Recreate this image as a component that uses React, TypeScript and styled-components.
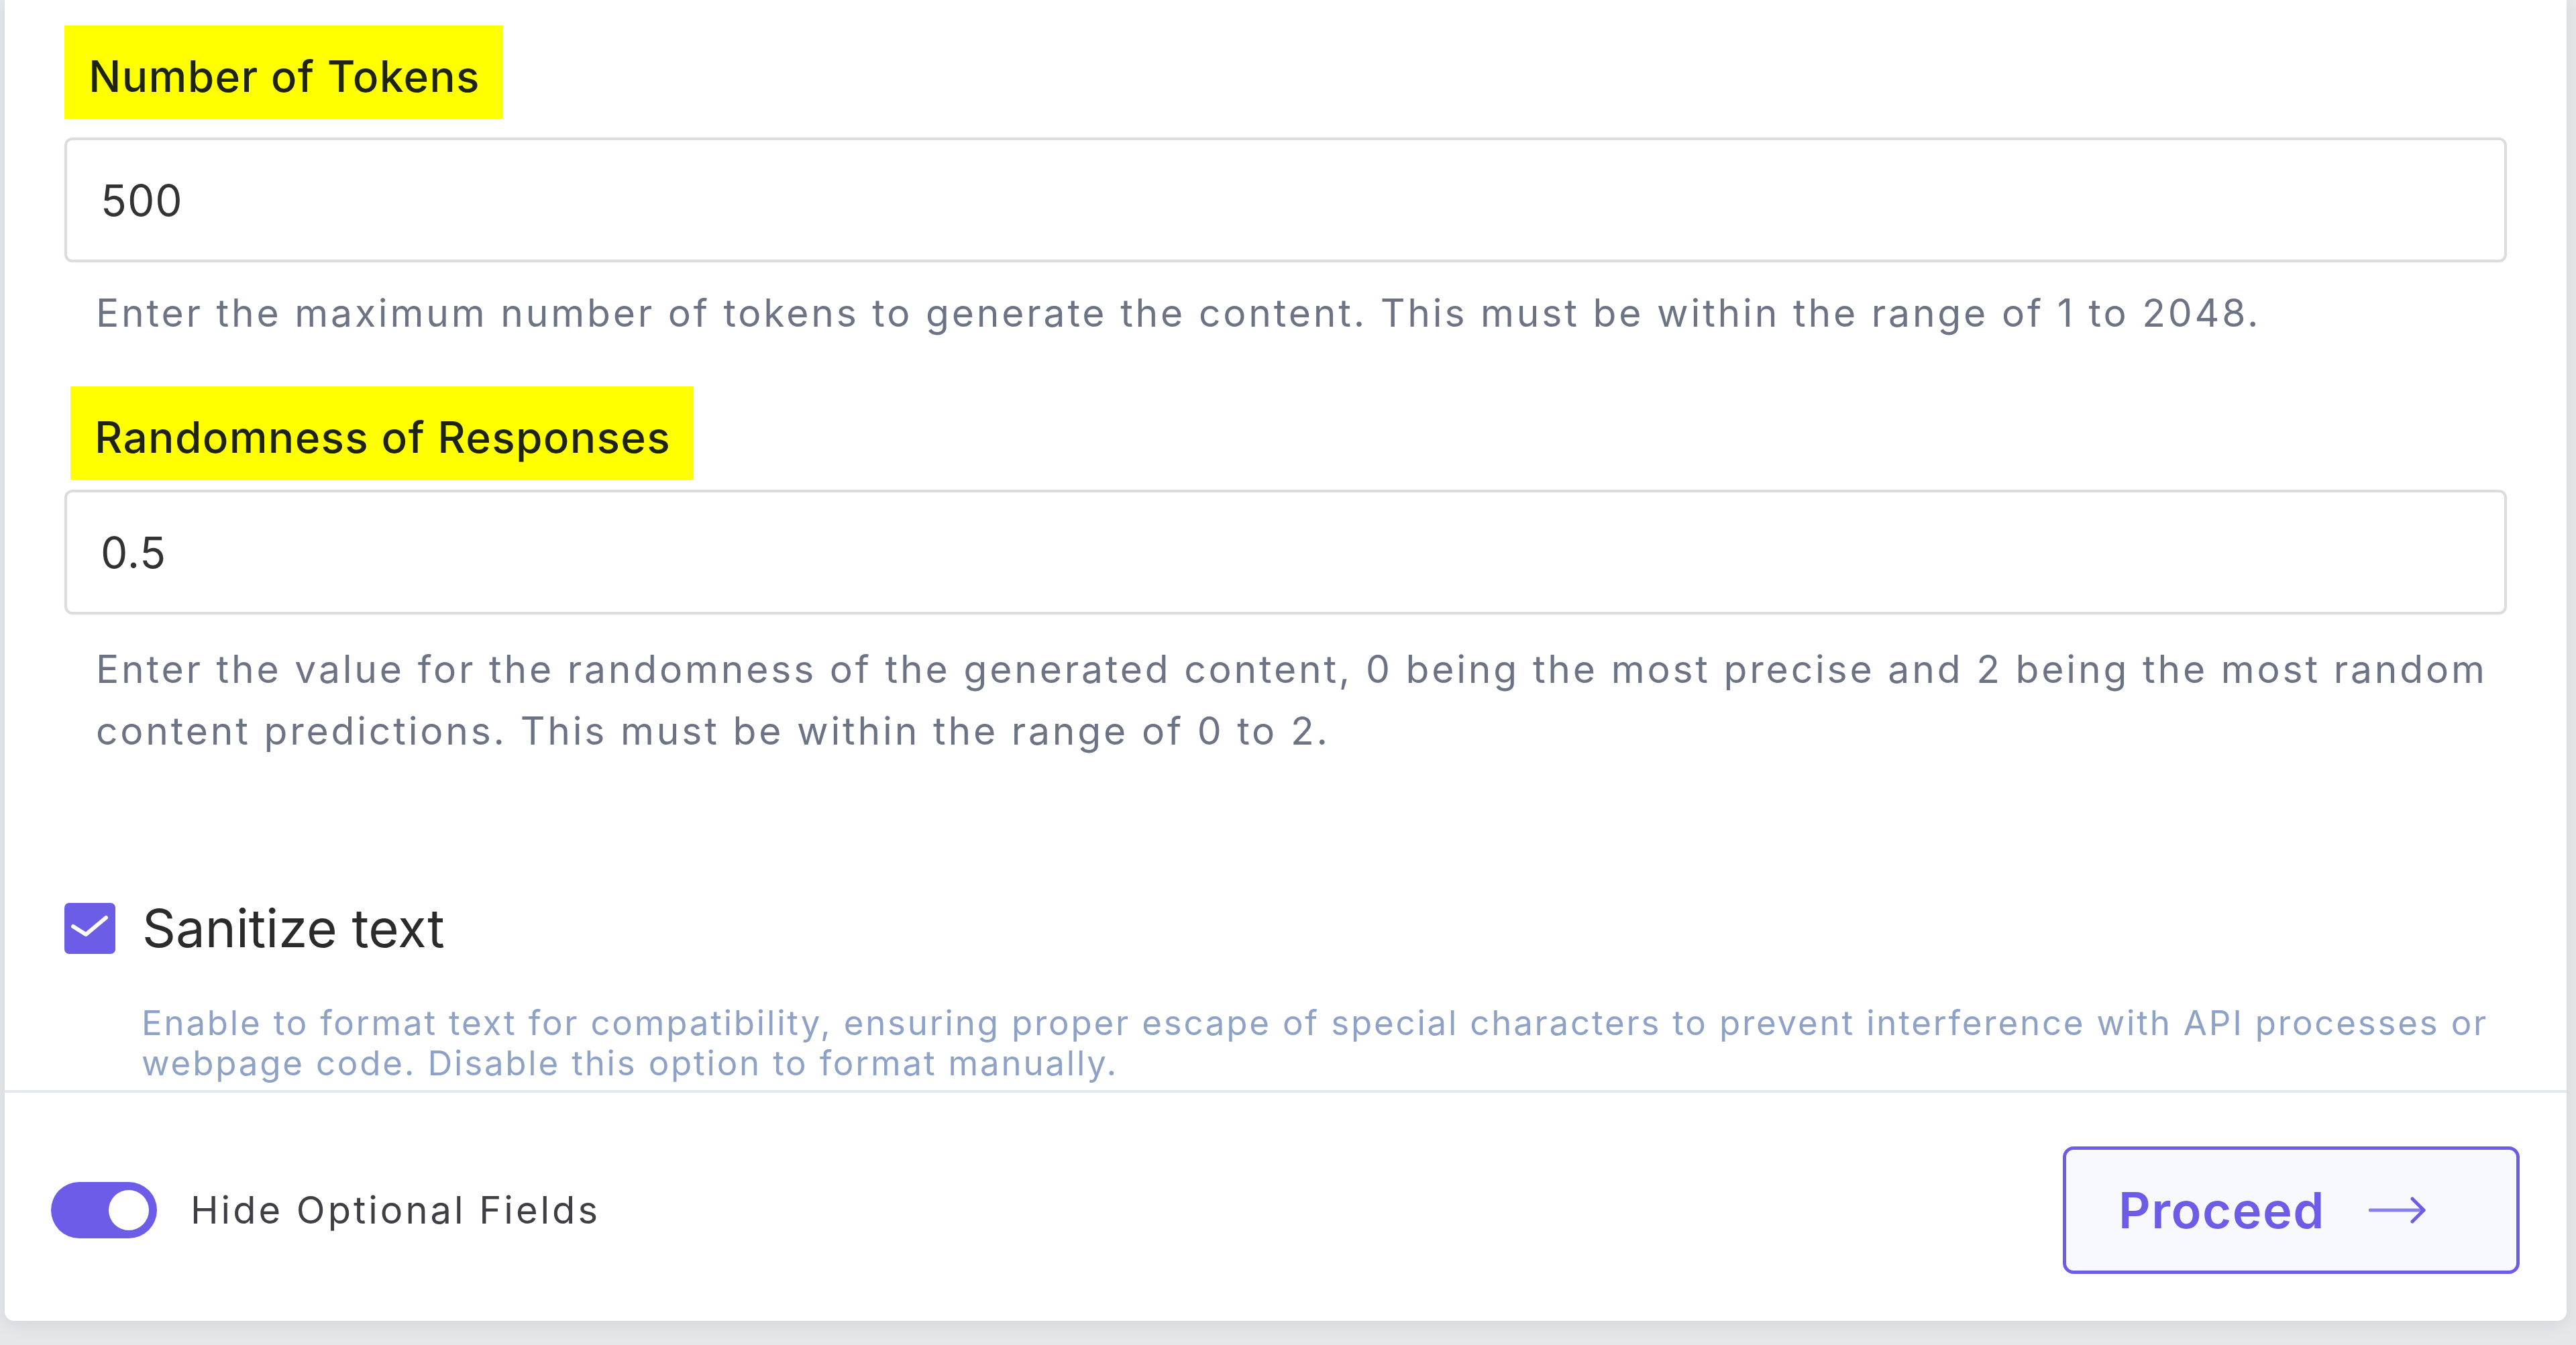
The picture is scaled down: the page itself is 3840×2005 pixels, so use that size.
import React from 'react';
import styled, { createGlobalStyle } from 'styled-components';

const GlobalStyle = createGlobalStyle`
  * {
    box-sizing: border-box;
  }
  body {
    margin: 0;
    background: #e5e7eb;
    font-family: Inter, "Noto Sans", sans-serif;
  }
`;

const Page = styled.div`
  min-height: 2005px;
  padding: 0 14px 40px 7px;
`;

const Card = styled.div`
  background: #fff;
  border-radius: 0 0 14px 14px;
  box-shadow: 0 6px 24px rgba(15, 23, 42, 0.08);
`;

const Body = styled.div`
  display: flex;
  flex-direction: column;
  padding: 38px 89px 10px;
`;

const Label = styled.label<{ $offset?: number; $gap: number }>`
  align-self: flex-start;
  margin-left: ${(p) => p.$offset || 0}px;
  margin-bottom: ${(p) => p.$gap}px;
  padding: 26px 34px 14px 36px;
  background: #ffff00;
  color: #1f2410;
  font-size: 64px;
  font-weight: 500;
  line-height: 99px;
  letter-spacing: 1.3px;
`;

const TextInput = styled.input`
  width: 100%;
  height: 186px;
  padding: 0 50px;
  border: 4px solid #dcdcdc;
  border-radius: 12px;
  background: #fff;
  color: #333;
  font-family: Inter, sans-serif;
  font-size: 64px;
  letter-spacing: 1px;
  outline: none;
  box-shadow: 0 1px 2px rgba(0, 0, 0, 0.04);
`;

const Helper = styled.p<{ $top: number; $after: number }>`
  margin: ${(p) => p.$top}px 0 ${(p) => p.$after}px;
  padding-left: 47px;
  color: #6b7385;
  font-size: 57px;
  line-height: 92px;
  letter-spacing: 3.8px;
`;

const CheckRow = styled.label`
  display: flex;
  align-items: center;
  gap: 40px;
  margin-top: 201px;
`;

const CheckBox = styled.span`
  display: flex;
  align-items: center;
  justify-content: center;
  width: 76px;
  height: 76px;
  border-radius: 7px;
  background: #6b5de6;
`;

const CheckText = styled.span`
  color: #2b2b2b;
  font-size: 78px;
  line-height: 94px;
`;

const Description = styled.p`
  margin: 64px 0 0;
  padding-left: 115px;
  color: #8ea2c8;
  font-size: 51px;
  line-height: 60px;
  letter-spacing: 2.8px;
`;

const Footer = styled.div`
  display: flex;
  align-items: center;
  justify-content: space-between;
  height: 344px;
  padding: 10px 70px 0 69px;
  border-top: 4px solid #e3e8f0;
`;

const ToggleGroup = styled.label`
  display: flex;
  align-items: center;
  gap: 50px;
`;

const Toggle = styled.span<{ $on: boolean }>`
  display: flex;
  justify-content: ${(p) => (p.$on ? 'flex-end' : 'flex-start')};
  align-items: center;
  width: 158px;
  height: 84px;
  padding: 0 12px;
  border-radius: 42px;
  background: ${(p) => (p.$on ? '#6c5ce7' : '#cbd5e1')};
`;

const Knob = styled.span`
  width: 60px;
  height: 60px;
  border-radius: 50%;
  background: #fff;
`;

const ToggleText = styled.span`
  color: #3f3f46;
  font-size: 56px;
  letter-spacing: 4px;
`;

const ProceedButton = styled.button`
  display: flex;
  align-items: center;
  gap: 65px;
  width: 681px;
  height: 190px;
  padding: 0 0 0 78px;
  border: 5px solid #6c5ce7;
  border-radius: 16px;
  background: #f8f8ff;
  color: #6c5ce7;
  font-family: Inter, sans-serif;
  font-size: 74px;
  font-weight: 600;
  letter-spacing: 1.5px;
  cursor: pointer;
`;

const CheckIcon = () => (
  <svg width="76" height="76" viewBox="0 0 76 76" fill="none">
    <path d="M28 50 L47 62 L77 37" transform="translate(-15 -15)" stroke="#fff" strokeWidth="6" strokeLinecap="round" strokeLinejoin="round" />
  </svg>
);

const ArrowIcon = () => (
  <svg width="87" height="40" viewBox="0 0 87 40" fill="none">
    <path d="M2 20 H82" stroke="#8b80ee" strokeWidth="5" strokeLinecap="round" />
    <path d="M65 3 L82 20 L65 37" stroke="#6c5ce7" strokeWidth="5" strokeLinecap="round" strokeLinejoin="round" />
  </svg>
);

export default function App() {
  const [sanitize, setSanitize] = React.useState(true);
  const [hideOptional, setHideOptional] = React.useState(true);

  return (
    <>
      <GlobalStyle />
      <Page>
        <Card>
          <Body>
            <Label $gap={28}>Number of Tokens</Label>
            <TextInput defaultValue="500" />
            <Helper $top={30} $after={63}>
              Enter the maximum number of tokens to generate the content. This must be within the range of 1 to 2048.
            </Helper>

            <Label $offset={9} $gap={15}>Randomness of Responses</Label>
            <TextInput defaultValue="0.5" />
            <Helper $top={36} $after={0}>
              Enter the value for the randomness of the generated content, 0 being the most precise and 2 being the most random content predictions. This must be within the range of 0 to 2.
            </Helper>

            <CheckRow onClick={() => setSanitize(!sanitize)}>
              <CheckBox>{sanitize && <CheckIcon />}</CheckBox>
              <CheckText>Sanitize text</CheckText>
            </CheckRow>
            <Description>
              Enable to format text for compatibility, ensuring proper escape of special characters to prevent interference with API processes or webpage code. Disable this option to format manually.
            </Description>
          </Body>

          <Footer>
            <ToggleGroup onClick={() => setHideOptional(!hideOptional)}>
              <Toggle $on={hideOptional}>
                <Knob />
              </Toggle>
              <ToggleText>Hide Optional Fields</ToggleText>
            </ToggleGroup>
            <ProceedButton>
              Proceed
              <ArrowIcon />
            </ProceedButton>
          </Footer>
        </Card>
      </Page>
    </>
  );
}
